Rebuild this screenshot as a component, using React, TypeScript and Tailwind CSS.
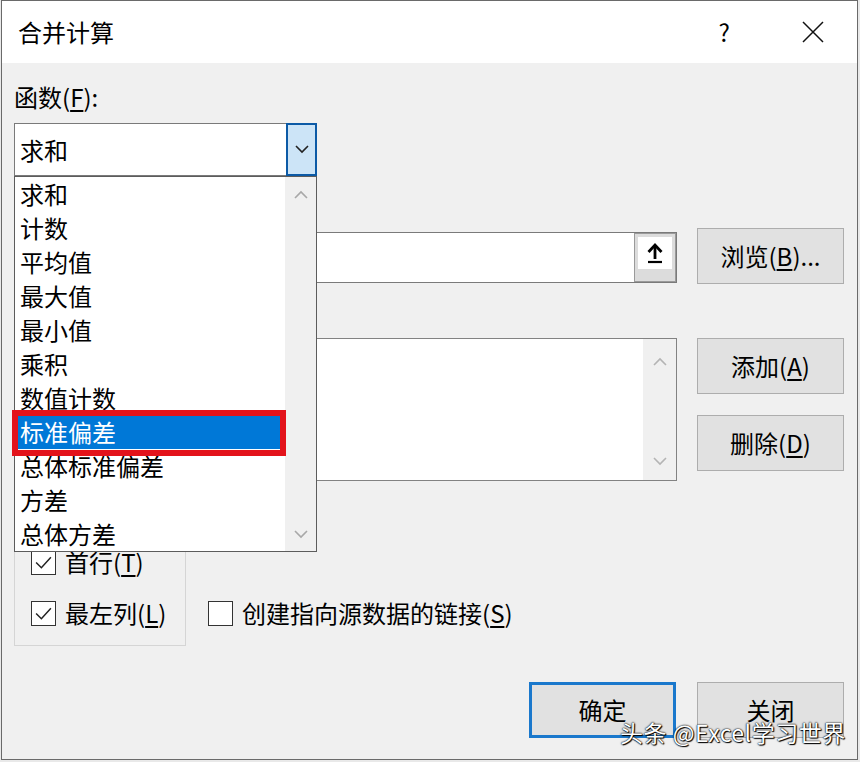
import React from 'react';

const items = ['求和', '计数', '平均值', '最大值', '最小值', '乘积', '数值计数', '标准偏差', '总体标准偏差', '方差', '总体方差'];

function Chevron({ dir, className }: { dir: 'up' | 'down'; className?: string }) {
  return (
    <svg width="14" height="9" viewBox="0 0 14 9" className={className}>
      <path d={dir === 'up' ? 'M1 8 L7 2 L13 8' : 'M1 1 L7 7 L13 1'} fill="none" stroke="currentColor" strokeWidth="1.6" />
    </svg>
  );
}

function Btn({ children, primary }: { children: React.ReactNode; primary?: boolean }) {
  return (
    <div
      className={`flex items-center justify-center text-[24px] leading-[34px] bg-[#e1e1e1] ${
        primary ? 'w-[147px] h-[56px] border-[3px] border-[#1a78cc]' : 'w-[147px] h-[56px] border border-[#adadad]'
      }`}
    >
      {children}
    </div>
  );
}

function Check({ checked, label, hotkey }: { checked?: boolean; label: string; hotkey: string }) {
  return (
    <div className="flex items-center h-[34px]">
      <div className="w-[25px] h-[25px] border-[1.5px] border-[#333333] bg-white flex items-center justify-center">
        {checked && (
          <svg width="19" height="19" viewBox="0 0 18 18">
            <path d="M2 9 L7 14 L16 4" fill="none" stroke="#222" strokeWidth="1.4" />
          </svg>
        )}
      </div>
      <span className="ml-[9px] text-[24px] leading-[34px] text-black">
        {label}(<span className="underline underline-offset-[3px]">{hotkey}</span>)
      </span>
    </div>
  );
}

export default function App() {
  return (
    <div className="w-[860px] h-[762px] bg-[#e9e9e9] pl-[1px] font-['Microsoft_YaHei','Noto_Sans_CJK_SC',sans-serif] text-black">
      <div className="relative w-[857px] h-[760px] border border-[#6a6a6a] bg-[#f0f0f0] flex flex-col">
        {/* Title bar */}
        <div className="h-[62px] shrink-0 bg-white flex items-center pl-[16px] pr-[33px]">
          <span className="flex-1 text-[24px] leading-[34px]">合并计算</span>
          <span className="text-[24px] leading-[34px] mr-[72px]">?</span>
          <svg width="22" height="22" viewBox="0 0 22 22">
            <path d="M1 1 L21 21 M21 1 L1 21" stroke="#111" strokeWidth="1.5" fill="none" />
          </svg>
        </div>

        {/* Body */}
        <div className="flex-1 flex flex-col pl-[12px] pr-[13px]">
          <div className="mt-[17px] h-[34px] text-[24px] leading-[34px]">
            函数(<span className="underline underline-offset-[3px]">F</span>):
          </div>

          {/* Combo + open dropdown */}
          <div className="relative mt-[9px] w-[303px] h-[53px] flex">
            <div className="flex-1 border border-r-0 border-[#7a7a7a] bg-white flex items-center pl-[5px] text-[24px] leading-[34px]">
              求和
            </div>
            <div className="w-[31px] border-2 border-[#0c5aa6] bg-[#cce4f7] flex items-center justify-center text-[#222]">
              <Chevron dir="down" />
            </div>

            <div className="absolute left-0 top-full z-10 w-[303px] h-[376px] border border-[#5c5c5c] bg-white flex">
              <div className="flex-1 flex flex-col">
                {items.map((it, i) => (
                  <div
                    key={it}
                    className={`h-[34px] pl-[5px] text-[24px] leading-[34px] ${i === 7 ? 'bg-[#0078d7] text-white' : 'text-black'}`}
                  >
                    {it}
                  </div>
                ))}
              </div>
              <div className="w-[31px] bg-[#f0f0f0] flex flex-col items-center justify-between pt-[13px] pb-[12px] text-[#a8a8a8]">
                <Chevron dir="up" />
                <Chevron dir="down" />
              </div>
              {/* annotation box */}
              <div className="absolute -left-[3px] top-[233px] w-[274px] h-[46px] border-[6px] border-[#e3131b]" />
            </div>
          </div>

          <div className="mt-[16px] h-[34px] text-[24px] leading-[34px]">
            引用位置(<span className="underline underline-offset-[3px]">R</span>):
          </div>

          <div className="mt-[2px] flex items-start gap-[20px]">
            <div className="mt-[4px] flex-1 h-[51px] border border-[#7a7a7a] bg-white flex justify-end">
              <div className="w-[42px] h-full border border-[#9a9a9a] bg-[#dcdcdc] p-[3px] pb-[12px]">
                <div className="w-full h-full bg-white flex items-center justify-center">
                  <svg width="18" height="22" viewBox="0 0 18 22">
                    <path d="M9 17 V4" stroke="#000" strokeWidth="2.8" fill="none" />
                    <path d="M2.5 10 L9 3 L15.5 10" stroke="#000" strokeWidth="2.8" fill="none" />
                    <path d="M2 20 H16" stroke="#000" strokeWidth="2.2" />
                  </svg>
                </div>
              </div>
            </div>
            <Btn>
              浏览(<span className="underline underline-offset-[3px]">B</span>)...
            </Btn>
          </div>

          <div className="mt-[12px] h-[34px] text-[24px] leading-[34px]">
            所有引用位置(<span className="underline underline-offset-[3px]">E</span>):
          </div>

          <div className="mt-[8px] flex items-start gap-[20px]">
            <div className="flex-1 h-[143px] border border-[#828282] bg-white flex justify-end">
              <div className="w-[33px] bg-[#f0f0f0] flex flex-col items-center justify-between pt-[18px] pb-[14px] text-[#b4b4b4]">
                <Chevron dir="up" />
                <Chevron dir="down" />
              </div>
            </div>
            <div className="flex flex-col gap-[21px]">
              <Btn>
                添加(<span className="underline underline-offset-[3px]">A</span>)
              </Btn>
              <Btn>
                删除(<span className="underline underline-offset-[3px]">D</span>)
              </Btn>
            </div>
          </div>

          <div className="mt-[24px] flex items-end">
            <div className="relative w-[172px] h-[141px] border border-[#d5d5d5] pl-[16px] pt-[39px] flex flex-col gap-[17px]">
              <span className="absolute -top-[17px] left-[8px] px-[3px] bg-[#f0f0f0] text-[24px] leading-[34px]">标签位置</span>
              <Check checked label="首行" hotkey="T" />
              <Check checked label="最左列" hotkey="L" />
            </div>
            <div className="ml-[22px] mb-[16px]">
              <Check label="创建指向源数据的链接" hotkey="S" />
            </div>
          </div>

          <div className="mt-[36px] flex justify-end gap-[21px]">
            <Btn primary>确定</Btn>
            <Btn>关闭</Btn>
          </div>
        </div>

        {/* watermark */}
        <div className="absolute left-[618px] top-[716px] text-[23px] leading-[30px] tracking-[0.5px] text-white [text-shadow:0_0_2px_#000,0_0_1px_#000,1px_1px_1px_#000]">
          头条 @Excel学习世界
        </div>
      </div>
    </div>
  );
}
